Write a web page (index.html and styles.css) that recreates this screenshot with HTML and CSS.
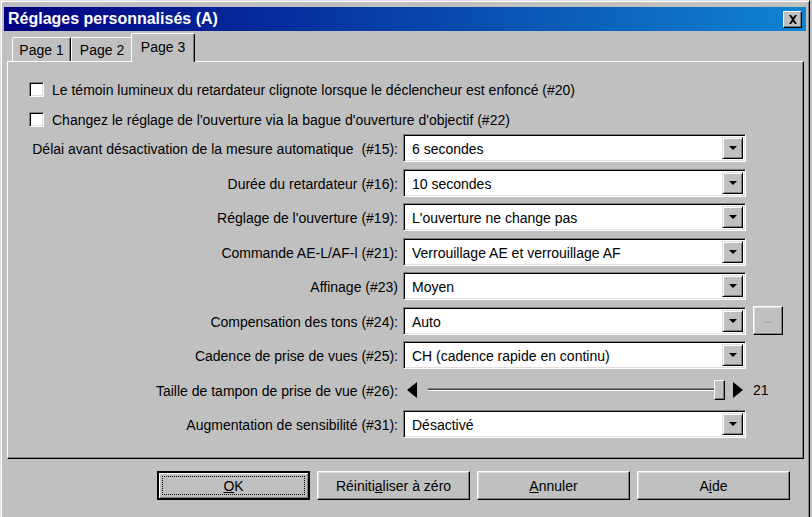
FILE: index.html
```html
<!DOCTYPE html>
<html lang="fr">
<head>
  <meta charset="UTF-8" />
  <title>Réglages personnalisés (A)</title>
  <link rel="stylesheet" href="styles.css">
</head>
<body>
  <div class="window">
    <div class="titlebar">
      <span class="title">Réglages personnalisés (A)</span>
      <span class="close">
        <svg width="10" height="9" viewBox="0 0 10 9"><path d="M1 0h2l2 2.5L7 0h2L6 4.5 9 9H7L5 6.5 3 9H1l3-4.5z" fill="#000"/></svg>
      </span>
    </div>

    <div class="tabs">
      <div class="tab">Page 1</div>
      <div class="tab">Page 2</div>
      <div class="tab active">Page 3</div>
    </div>

    <div class="panel">
      <div class="check"><span class="box"></span>Le témoin lumineux du retardateur clignote lorsque le déclencheur est enfoncé (#20)</div>
      <div class="check"><span class="box"></span>Changez le réglage de l'ouverture via la bague d'ouverture d'objectif (#22)</div>

      <div class="form">
        <div class="label">Délai avant désactivation de la mesure automatique&nbsp; (#15):</div>
        <div class="combo"><span class="value">6 secondes</span><span class="drop"></span></div>
        <div></div>

        <div class="label">Durée du retardateur (#16):</div>
        <div class="combo"><span class="value">10 secondes</span><span class="drop"></span></div>
        <div></div>

        <div class="label">Réglage de l'ouverture (#19):</div>
        <div class="combo"><span class="value">L'ouverture ne change pas</span><span class="drop"></span></div>
        <div></div>

        <div class="label">Commande AE-L/AF-l (#21):</div>
        <div class="combo"><span class="value">Verrouillage AE et verrouillage AF</span><span class="drop"></span></div>
        <div></div>

        <div class="label">Affinage (#23)</div>
        <div class="combo"><span class="value">Moyen</span><span class="drop"></span></div>
        <div></div>

        <div class="label">Compensation des tons (#24):</div>
        <div class="combo"><span class="value">Auto</span><span class="drop"></span></div>
        <div class="more">...</div>

        <div class="label">Cadence de prise de vues (#25):</div>
        <div class="combo"><span class="value">CH (cadence rapide en continu)</span><span class="drop"></span></div>
        <div></div>

        <div class="label">Taille de tampon de prise de vue (#26):</div>
        <div class="slider">
          <span class="arrow left"></span>
          <span class="track"><span class="line"></span><span class="thumb"></span></span>
          <span class="arrow right"></span>
          <span class="num">21</span>
        </div>
        <div></div>

        <div class="label">Augmentation de sensibilité (#31):</div>
        <div class="combo"><span class="value">Désactivé</span><span class="drop"></span></div>
        <div></div>
      </div>
    </div>

    <div class="buttons">
      <div class="btn default"><span class="focus"><u>O</u>K</span></div>
      <div class="btn">Réiniti<u>a</u>liser à zéro</div>
      <div class="btn"><u>A</u>nnuler</div>
      <div class="btn">A<u>i</u>de</div>
    </div>
  </div>
</body>
</html>
```

FILE: styles.css
```css
* {
  box-sizing: border-box;
}

body {
  margin: 0;
  width: 812px;
  height: 517px;
  overflow: hidden;
  background: #c0c0c0;
  font-family: 'Liberation Sans', Arial, sans-serif;
  font-size: 14px;
  color: #000;
}

.window {
  width: 810px;
  height: 517px;
  padding: 6px 3px 0 3px;
  border-top: 1px solid #dfdfdf;
  border-left: 1px solid #dfdfdf;
  border-right: 1px solid #000;
  box-shadow: inset 1px 1px 0 #fff, inset -1px 0 0 #808080;
  display: flex;
  flex-direction: column;
}

.titlebar {
  height: 24px;
  flex-shrink: 0;
  display: flex;
  align-items: center;
  justify-content: space-between;
  padding: 0 4px 0 4px;
  background: linear-gradient(90deg, #000080, #1084d0);
}

.title {
  color: #fff;
  font-weight: bold;
  font-size: 16px;
}

.close {
  width: 19px;
  height: 17px;
  display: flex;
  align-items: center;
  justify-content: center;
  background: #c0c0c0;
  border: 1px solid;
  border-color: #fff #000 #000 #fff;
  box-shadow: inset -1px -1px 0 #808080;
}

/* tabs */
.tabs {
  display: flex;
  align-items: flex-end;
  height: 30px;
  flex-shrink: 0;
  padding-left: 8px;
}

.tab {
  height: 24px;
  width: 59px;
  padding-top: 4px;
  text-align: center;
  border: 1px solid;
  border-color: #fff #000 transparent #fff;
  border-bottom: none;
  border-radius: 2px 2px 0 0;
  box-shadow: inset -1px 0 0 #808080;
}

.tab + .tab {
  width: 62px;
}

.tab.active {
  width: 64px;
  height: 29px;
  margin: 0 0 -1px -2px;
  padding-top: 5px;
  position: relative;
  z-index: 1;
  background: #c0c0c0;
}

.panel {
  height: 398px;
  flex-shrink: 0;
  margin: 0 2px 0 3px;
  border: 1px solid;
  border-color: #fff #000 #000 #fff;
  box-shadow: inset -1px -1px 0 #808080;
  padding: 20px 0 0 21px;
}

.check {
  display: flex;
  align-items: center;
  gap: 8px;
  height: 15px;
  margin-bottom: 15px;
}

.box {
  width: 15px;
  height: 15px;
  background: #fff;
  border: 1px solid;
  border-color: #808080 #fff #fff #808080;
  box-shadow: inset 1px 1px 0 #000, inset -1px -1px 0 #dfdfdf;
}

.form {
  display: grid;
  grid-template-columns: 390px 343px 32px;
  grid-auto-rows: 28px;
  column-gap: 5px;
  row-gap: 6.5px;
  margin-top: -8px;
  margin-left: -21px;
  align-items: center;
}

.label {
  text-align: right;
  white-space: nowrap;
  padding-top: 2px;
}

.combo {
  height: 28px;
  display: flex;
  background: #fff;
  border: 1px solid;
  border-color: #808080 #fff #fff #808080;
  box-shadow: inset 1px 1px 0 #000, inset -1px -1px 0 #dfdfdf;
  padding: 2px;
}

.combo .value {
  flex: 1;
  padding: 4px 0 0 6px;
}

.drop {
  width: 21px;
  background: #c0c0c0;
  border: 1px solid;
  border-color: #dfdfdf #000 #000 #dfdfdf;
  box-shadow: inset 1px 1px 0 #fff, inset -1px -1px 0 #808080;
  display: flex;
  align-items: center;
  justify-content: center;
}

.drop::after {
  content: "";
  border-left: 4px solid transparent;
  border-right: 4px solid transparent;
  border-top: 4px solid #000;
}

.more {
  width: 30px;
  height: 29px;
  margin-left: 2px;
  border: 1px solid;
  border-color: #fff #000 #000 #fff;
  box-shadow: inset -1px -1px 0 #808080, inset 1px 1px 0 #dfdfdf;
  text-align: center;
  color: #808080;
  font-size: 11px;
  line-height: 24px;
}

.slider {
  height: 28px;
  width: 380px;
  display: flex;
  align-items: center;
  padding-left: 4px;
}

.arrow {
  width: 0;
  height: 0;
  border-top: 8px solid transparent;
  border-bottom: 8px solid transparent;
}

.arrow.left {
  border-right: 10px solid #000;
}

.arrow.right {
  margin-left: 8px;
  border-left: 10px solid #000;
}

.track {
  width: 297px;
  margin-left: 11px;
  display: flex;
  align-items: center;
}

.line {
  flex: 1;
  height: 3px;
  border-top: 1px solid #808080;
  border-bottom: 1px solid #fff;
  background: #404040;
}

.thumb {
  width: 11px;
  height: 20px;
  margin-left: -3px;
  background: #c0c0c0;
  border: 1px solid;
  border-color: #fff #000 #000 #fff;
  box-shadow: inset -1px -1px 0 #808080;
}

.num {
  margin-left: 10px;
}

.buttons {
  display: flex;
  gap: 7px;
  margin-top: 12px;
  padding-left: 153px;
}

.btn {
  width: 153px;
  height: 29px;
  display: flex;
  align-items: center;
  justify-content: center;
  border: 1px solid;
  border-color: #fff #000 #000 #fff;
  box-shadow: inset -1px -1px 0 #808080, inset 1px 1px 0 #dfdfdf;
}

.btn.default {
  border: 2px solid #000;
  box-shadow: inset 1px 1px 0 #fff, inset -1px -1px 0 #808080;
  padding: 3px;
}

.focus {
  width: 100%;
  height: 100%;
  display: flex;
  align-items: center;
  justify-content: center;
  border: 1px dotted #000;
}
```
